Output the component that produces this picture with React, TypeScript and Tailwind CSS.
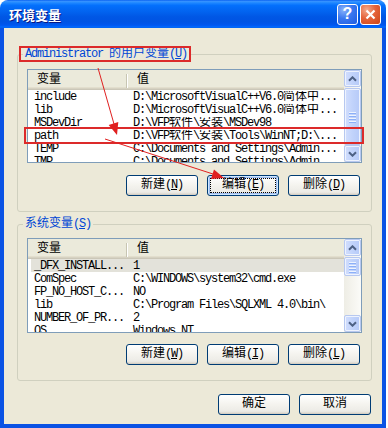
import type { ReactNode } from 'react';

const CJK = /([\u3400-\u9fff\uff00-\uffef]+)/;

// SimSun-like metrics: ascii cells 6px, CJK cells 12px
function Txt({ s }: { s: string }) {
  return (
    <>
      {s.split(CJK).map((p, i) =>
        i % 2 ? (
          <span key={i} className="tracking-normal">
            {p}
          </span>
        ) : (
          p
        ),
      )}
    </>
  );
}

function Btn({ label, hot, focus }: { label: string; hot?: string; focus?: boolean }) {
  return (
    <button
      className={`flex h-[21px] w-[72px] items-center justify-center rounded-[3px] border border-[#003C74] bg-[linear-gradient(#FFFFFF,#F4F3EE_50%,#ECEBE6_85%,#D6D0C5)] text-[12px] text-black ${
        focus
          ? 'shadow-[inset_0_0_0_1px_#CEE7FF,inset_0_0_0_2px_#9CBBEE] outline-1 outline-offset-[-4px] outline-dotted outline-black'
          : 'shadow-[inset_0_-1px_#D6D0C5]'
      }`}
    >
      <Txt s={label} />
      {hot && (
        <>
          (<span className="underline">{hot}</span>)
        </>
      )}
    </button>
  );
}

function ScrollBtn({ down }: { down?: boolean }) {
  return (
    <div className="flex h-[17px] w-[17px] items-center justify-center rounded-[2px] border border-[#B7C8F0] bg-[linear-gradient(to_right,#D2DEFD,#C1D3FB_50%,#B6CAF8)] shadow-[inset_0_0_0_1px_#EEF3FE]">
      <svg width="9" height="6" viewBox="0 0 9 6">
        <path
          d={down ? 'M1 1.2 L4.5 4.7 L8 1.2' : 'M1 4.8 L4.5 1.3 L8 4.8'}
          fill="none"
          stroke="#4D6185"
          strokeWidth="2"
        />
      </svg>
    </div>
  );
}

function ScrollBar({ thumb }: { thumb: string }) {
  return (
    <div className="flex w-[17px] flex-col bg-[linear-gradient(to_right,#EEEDE5,#FBFBF8)]">
      <ScrollBtn />
      <div className="flex-1 pt-px">
        <div
          className={`flex ${thumb} flex-col items-center justify-center gap-px rounded-[2px] border border-[#B7C8F0] bg-[linear-gradient(to_right,#D2DEFD,#C1D3FB_50%,#B6CAF8)] shadow-[inset_0_0_0_1px_#EEF3FE]`}
        >
          <div className="h-px w-[7px] bg-[#EEF4FE] shadow-[0_1px_#8CB0F8]" />
          <div className="mt-px h-px w-[7px] bg-[#EEF4FE] shadow-[0_1px_#8CB0F8]" />
          <div className="mt-px h-px w-[7px] bg-[#EEF4FE] shadow-[0_1px_#8CB0F8]" />
          <div className="mt-px h-px w-[7px] bg-[#EEF4FE] shadow-[0_1px_#8CB0F8]" />
        </div>
      </div>
      <ScrollBtn down />
    </div>
  );
}

type Row = { name: string; value: string; sel?: boolean };

function ListView({ rows, h, thumb }: { rows: Row[]; h: string; thumb: string }) {
  return (
    <div className={`flex ${h} border border-[#7F9DB9] bg-white`}>
      <div className="flex-1 overflow-hidden">
        <div className="flex h-[20px] bg-[#EBEADB] text-[12px] tracking-normal shadow-[inset_0_-1px_#CBC7B8,inset_0_-2px_#D6D2C2,inset_0_-3px_#E2DECD]">
          <div className="flex w-[99px] items-center justify-between pl-[9px] pt-[1px]">
            <span>变量</span>
            <span className="h-[14px] w-px bg-[#C7C5B2] shadow-[1px_0_#FFFFFF]" />
          </div>
          <div className="flex items-center pl-[10px] pt-[1px]">值</div>
        </div>
        {rows.map((r) => (
          <div key={r.name + r.value} className="flex h-[13px] pl-[3px]">
            <div className={`flex flex-1 pt-[1px] ${r.sel ? 'bg-[#E3E2DA]' : ''}`}>
              <div className="w-[96px] overflow-hidden whitespace-nowrap pl-[3px]">
                <Txt s={r.name} />
              </div>
              <div className="flex-1 overflow-hidden whitespace-nowrap pl-[6px]">
                <Txt s={r.value} />
              </div>
            </div>
          </div>
        ))}
      </div>
      <ScrollBar thumb={thumb} />
    </div>
  );
}

function Group({ legend, mt, children }: { legend: ReactNode; mt?: string; children: ReactNode }) {
  return (
    <fieldset className={`w-[355px] rounded-[3px] border border-[#D0D0BF] px-[9px] pb-[15px] ${mt ?? ''}`}>
      <legend className="ml-[-4px] h-[16px] px-[2px] leading-[16px] text-[#0046D5]">{legend}</legend>
      {children}
    </fieldset>
  );
}

const userRows: Row[] = [
  { name: 'include', value: 'D:\\MicrosoftVisualC++V6.0简体中...' },
  { name: 'lib', value: 'D:\\MicrosoftVisualC++V6.0简体中...' },
  { name: 'MSDevDir', value: 'D:\\VFP软件\\安装\\MSDev98' },
  { name: 'path', value: 'D:\\VFP软件\\安装\\Tools\\WinNT;D:\\...' },
  { name: 'TEMP', value: 'C:\\Documents and Settings\\Admin...' },
  { name: 'TMP', value: 'C:\\Documents and Settings\\Admin...' },
];

const sysRows: Row[] = [
  { name: '_DFX_INSTALL...', value: '1', sel: true },
  { name: 'ComSpec', value: 'C:\\WINDOWS\\system32\\cmd.exe' },
  { name: 'FP_NO_HOST_C...', value: 'NO' },
  { name: 'lib', value: 'C:\\Program Files\\SQLXML 4.0\\bin\\' },
  { name: 'NUMBER_OF_PR...', value: '2' },
  { name: 'OS', value: 'Windows_NT' },
];

export default function App() {
  return (
    <div className="relative h-[428px] w-[388px] bg-white">
      <div className="flex h-[428px] w-[386px] flex-col">
        {/* title bar */}
        <div className="flex h-[28px] items-center rounded-t-[8px] bg-[linear-gradient(to_bottom,#0058EE_0%,#3A93FF_4%,#288EFF_8%,#127DFF_14%,#036FFC_20%,#0262EE_44%,#0057E5_60%,#0054E3_76%,#0055EB_86%,#005BF5_92%,#026AFE_96%,#0062EF_100%)] pl-[9px] pr-[5px]">
          <span className="flex-1 pt-[1px] font-['Noto_Sans_CJK_SC',sans-serif] text-[13px] font-bold text-white [text-shadow:1px_1px_#0A1883]">
            环境变量
          </span>
          <div className="flex gap-[2px]">
            <div className="flex h-[21px] w-[21px] items-center justify-center rounded-[3px] border border-white bg-[radial-gradient(circle_at_30%_25%,#8AB3FA,#3A78F0_45%,#1F5CE0)] font-['Liberation_Sans',sans-serif] text-[16px] font-bold leading-none text-white">
              ?
            </div>
            <div className="flex h-[21px] w-[21px] items-center justify-center rounded-[3px] border border-white bg-[radial-gradient(circle_at_30%_25%,#F3A98C,#E5633A_45%,#CC4416)]">
              <svg width="11" height="11" viewBox="0 0 11 11">
                <path d="M1.5 1.5 L9.5 9.5 M9.5 1.5 L1.5 9.5" stroke="white" strokeWidth="2.2" />
              </svg>
            </div>
          </div>
        </div>

        {/* body */}
        <div className="flex flex-1 flex-col border-x-4 border-b-4 border-[#0A52E4] bg-[#ECE9D8] pl-[13px] pt-[18px] font-['Liberation_Mono','Noto_Sans_CJK_SC',monospace] text-[12px] leading-[13px] tracking-[-1.2px] text-black">
          <Group
            legend={
              <>
                <Txt s="Administrator 的用户变量" />(<span className="underline">U</span>)
              </>
            }
          >
            <div className="pt-[7px]">
              <ListView rows={userRows} h="h-[94px]" thumb="h-[57px]" />
            </div>
            <div className="mt-[12px] flex justify-end gap-[9px] pr-[2px]">
              <Btn label="新建" hot="N" />
              <Btn label="编辑" hot="E" focus />
              <Btn label="删除" hot="D" />
            </div>
          </Group>

          <Group
            mt="mt-[4px]"
            legend={
              <>
                <Txt s="系统变量" />(<span className="underline">S</span>)
              </>
            }
          >
            <div className="pt-[6px]">
              <ListView rows={sysRows} h="h-[95px]" thumb="h-[19px]" />
            </div>
            <div className="mt-[11px] flex justify-end gap-[9px] pr-[2px]">
              <Btn label="新建" hot="W" />
              <Btn label="编辑" hot="I" />
              <Btn label="删除" hot="L" />
            </div>
          </Group>

          <div className="mt-[13px] flex justify-end gap-[9px] pr-[11px]">
            <Btn label="确定" />
            <Btn label="取消" />
          </div>
        </div>
      </div>

      {/* red annotations drawn over the dialog */}
      <svg className="pointer-events-none absolute inset-0" width="388" height="428">
        <g fill="none" stroke="#DC2A2A" strokeWidth="2">
          <rect x="20" y="47" width="170" height="14" />
          <rect x="25" y="128" width="338" height="15" />
        </g>
        <g stroke="#E02020" strokeWidth="1">
          <line x1="98" y1="68" x2="114" y2="124" />
          <line x1="105" y1="139" x2="213" y2="174" />
        </g>
        <g fill="#E02020">
          <polygon points="117,135 108.7,125 118.3,122" />
          <polygon points="224,178 211,179 214,169.5" />
        </g>
      </svg>
    </div>
  );
}
